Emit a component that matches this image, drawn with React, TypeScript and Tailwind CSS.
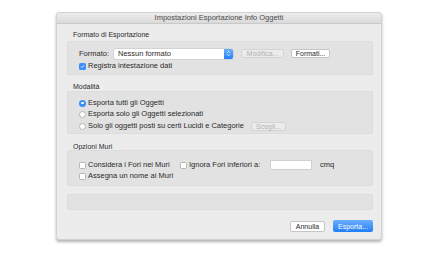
export default function App() {
  return (
    <div className="h-[257px] w-[432px] bg-white pl-[56px] pt-[12px] font-['Liberation_Sans',Arial,sans-serif] text-[7.5px] leading-none text-[#2a2a2a]">
      <div className="flex h-[228px] w-[326px] flex-col rounded-[3px] border border-[#d2d2d2] bg-[#ececec] shadow-[0_2px_3px_rgba(0,0,0,0.3)]">

        {/* Title bar */}

        <div className="flex h-[11px] shrink-0 items-center justify-center rounded-t-[3px] border-b border-[#c9c9c9] bg-gradient-to-b from-[#ececec] to-[#dadada] text-[7.5px] text-[#4a4a4a]">
          Impostazioni Esportazione Info Oggetti
        </div>

        <div className="flex flex-1 flex-col pl-[10px] pr-[8px]">

          {/* Formato di Esportazione */}

          <p className="mt-[7px] h-[10px] pl-[6px] text-[7px]">Formato di Esportazione</p>

          <div className="flex h-[34px] flex-col rounded-[2px] border border-[#dcdcdc] bg-[#e2e2e2] pl-[11px]">
            <div className="mt-[6px] flex h-[11px] items-center">
              <span className="w-[35px]">Formato:</span>
              <div className="flex h-[10px] w-[119px] items-center justify-between rounded-[2px] bg-white pl-[4px] shadow-[0_0_0_0.5px_#c4c4c4]">
                <span>Nessun formato</span>
                <div className="flex h-[10px] w-[9px] flex-col items-center justify-center rounded-r-[2px] bg-gradient-to-b from-[#6aaefc] to-[#1d7ef6]">
                  <svg width="5" height="7" viewBox="0 0 5 7">
                    <path d="M1 2.8 L2.5 1.3 L4 2.8 M1 4.2 L2.5 5.7 L4 4.2" stroke="white" strokeWidth="0.8" fill="none" />
                  </svg>
                </div>
              </div>
              <div className="ml-[8px] flex h-[9px] w-[43px] items-center justify-center rounded-[2px] border border-[#d4d4d4] bg-[#ebebeb] text-[7px] text-[#b2b2b2]">
                Modifica...
              </div>
              <div className="ml-[7px] flex h-[9px] w-[39px] items-center justify-center rounded-[2px] border border-[#c6c6c6] bg-white text-[7px]">
                Formati...
              </div>
            </div>
            <div className="mt-[3px] flex h-[8px] items-center">
              <div className="flex h-[7px] w-[7px] items-center justify-center rounded-[1.5px] bg-[#3b8ef7]">
                <svg width="5" height="5" viewBox="0 0 5 5">
                  <path d="M1 2.6 L2 3.6 L4 1.2" stroke="white" strokeWidth="0.8" fill="none" />
                </svg>
              </div>
              <span className="ml-[2px]">Registra intestazione dati</span>
            </div>
          </div>

          {/* Modalità */}

          <p className="mt-[8px] h-[8px] pl-[6px] text-[7px]">Modalità</p>

          <div className="flex h-[43px] flex-col rounded-[2px] border border-[#dcdcdc] bg-[#e2e2e2] pl-[11px]">
            <div className="mt-[7px] flex h-[8px] items-center">
              <div className="flex h-[7px] w-[7px] items-center justify-center rounded-full bg-[#3b8ef7]">
                <div className="h-[2.5px] w-[2.5px] rounded-full bg-white" />
              </div>
              <span className="ml-[2px]">Esporta tutti gli Oggetti</span>
            </div>
            <div className="mt-[3px] flex h-[8px] items-center">
              <div className="h-[7px] w-[7px] rounded-full border border-[#b5b5b5] bg-white" />
              <span className="ml-[2px]">Esporta solo gli Oggetti selezionati</span>
            </div>
            <div className="mt-[3px] flex h-[10px] items-center">
              <div className="h-[7px] w-[7px] rounded-full border border-[#b5b5b5] bg-white" />
              <span className="ml-[2px]">Solo gli oggetti posti su certi Lucidi e Categorie</span>
              <div className="ml-[7px] flex h-[9px] w-[35px] items-center justify-center rounded-[2px] border border-[#d4d4d4] bg-[#ebebeb] text-[7px] text-[#b2b2b2]">
                Scegli...
              </div>
            </div>
          </div>

          {/* Opzioni Muri */}

          <p className="mt-[9px] h-[7px] pl-[6px] text-[7px]">Opzioni Muri</p>

          <div className="flex h-[36px] flex-col rounded-[2px] border border-[#dcdcdc] bg-[#e2e2e2] pl-[11px]">
            <div className="mt-[9px] flex h-[10px] items-center">
              <div className="h-[7px] w-[7px] rounded-[1.5px] border border-[#b5b5b5] bg-white" />
              <span className="ml-[2px] w-[92px]">Considera i Fori nei Muri</span>
              <div className="h-[7px] w-[7px] rounded-[1.5px] border border-[#b5b5b5] bg-white" />
              <span className="ml-[2px] w-[81px]">Ignora Fori inferiori a:</span>
              <div className="h-[10px] w-[42px] border border-[#d0d0d0] bg-white" />
              <span className="ml-[8px]">cmq</span>
            </div>
            <div className="mt-[2px] flex h-[8px] items-center">
              <div className="h-[7px] w-[7px] rounded-[1.5px] border border-[#b5b5b5] bg-white" />
              <span className="ml-[2px]">Assegna un nome ai Muri</span>
            </div>
          </div>

          {/* Empty box */}

          <div className="mt-[8px] h-[16px] rounded-[2px] border border-[#dcdcdc] bg-[#e2e2e2]" />

          {/* Buttons */}

          <div className="mt-[10px] flex items-center justify-end gap-[8px]">
            <div className="flex h-[11px] w-[35px] items-center justify-center rounded-[2px] border border-[#c6c6c6] bg-white text-[7px]">
              Annulla
            </div>
            <div className="flex h-[12px] w-[40px] items-center justify-center rounded-[2px] bg-gradient-to-b from-[#6aaefc] to-[#1d7ef6] text-[7px] text-white">
              Esporta...
            </div>
          </div>

        </div>

      </div>
    </div>
  );
}
